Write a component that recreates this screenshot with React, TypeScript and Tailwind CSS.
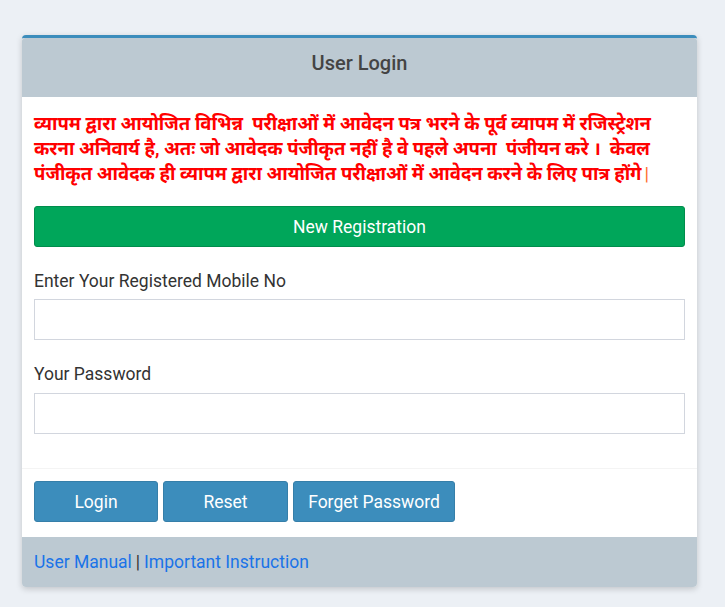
export default function App() {
  return (
    <div className="min-h-[607px] bg-[#ecf0f5] pt-[35px] pl-[22px] font-['Roboto','Noto_Sans','Noto_Sans_Devanagari',sans-serif]">
      <div className="w-[675px] rounded-[4px] border-t-[3px] border-[#3c8dbc] bg-white shadow-[0_2px_6px_rgba(0,0,0,0.18)]">
        <div className="flex h-[59px] items-start justify-center rounded-t-[3px] bg-[#bcc9d2] pt-[13px]">
          <h3 className="text-[20px] leading-[24px] font-medium text-[#444]">User Login</h3>
        </div>

        <div className="px-[12px] pt-[15px] pb-[34px]">
          <p className="text-[18.5px] leading-[25px] font-bold text-[#ff0000]">
            व्यापम द्वारा आयोजित विभिन्न &nbsp;परीक्षाओं में आवेदन पत्र भरने के पूर्व व्यापम में रजिस्ट्रेशन करना अनिवार्य है, अतः जो आवेदक पंजीकृत नहीं है वे पहले अपना &nbsp;पंजीयन करे । &nbsp;केवल पंजीकृत आवेदक ही व्यापम द्वारा आयोजित परीक्षाओं में आवेदन करने के लिए पात्र होंगे<span className="ml-[3px] font-normal text-[#ff6a2a]">|</span>
          </p>

          <button className="mt-[19px] flex h-[41px] w-full items-center justify-center rounded-[3px] border border-[#008d4c] bg-[#00a65a] pt-[1px] text-[17.5px] text-white">
            New Registration
          </button>

          <label className="mt-[22px] block text-[17.5px] leading-[24px] text-[#333]">Enter Your Registered Mobile No</label>
          <input className="mt-[6px] block h-[41px] w-full border border-[#d2d6de] px-3 text-[18px] outline-none" />

          <label className="mt-[22px] block text-[17.5px] leading-[24px] text-[#333]">Your Password</label>
          <input type="password" className="mt-[7px] block h-[41px] w-full border border-[#d2d6de] px-3 text-[18px] outline-none" />
        </div>

        <div className="flex gap-[5px] border-t border-[#f4f4f4] px-[12px] pt-[12px] pb-[15px]">
          <button className="h-[41px] w-[124px] rounded-[3px] border border-[#367fa9] bg-[#3c8dbc] pt-[2px] text-[17.5px] text-white">Login</button>
          <button className="h-[41px] w-[125px] rounded-[3px] border border-[#367fa9] bg-[#3c8dbc] pt-[2px] text-[17.5px] text-white">Reset</button>
          <button className="h-[41px] w-[162px] rounded-[3px] border border-[#367fa9] bg-[#3c8dbc] pt-[2px] text-[17.5px] text-white">Forget Password</button>
        </div>

        <div className="flex h-[50px] items-center rounded-b-[4px] bg-[#bcc9d2] px-[12px] text-[17.5px] text-[#333]">
          <a href="#" className="text-[#1a73e8]">User Manual</a>
          <span className="mx-[4px]">|</span>
          <a href="#" className="text-[#1a73e8]">Important Instruction</a>
        </div>
      </div>
    </div>
  );
}
